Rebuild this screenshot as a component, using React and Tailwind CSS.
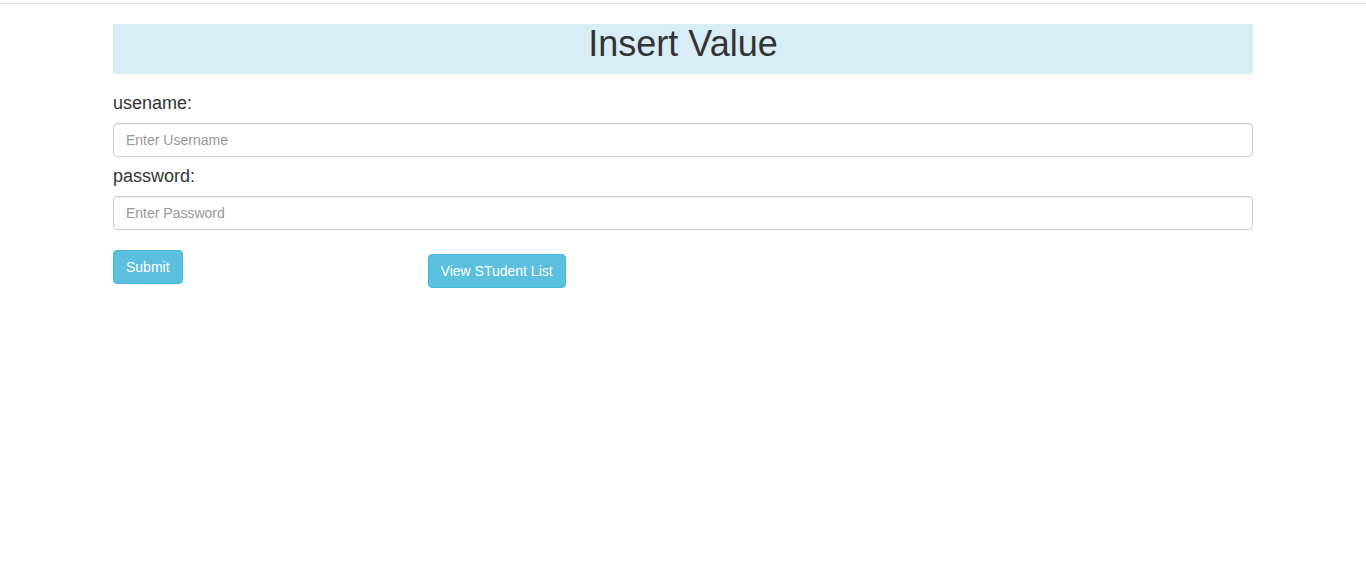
export default function App() {
  return (
    <div className="min-h-[585px] bg-white text-[#333]" style={{ fontFamily: '"Liberation Sans", Arial, sans-serif' }}>
      <div className="mt-[3px] border-t border-[#dddddd]" />
      <div className="mx-auto w-[1140px] pt-[20px]">
        <div className="h-[50px] bg-[#d9edf7] text-center">
          <h1 className="text-[36px] leading-[40px] font-normal text-[#333]">Insert Value</h1>
        </div>
        <div className="mt-[18px]">
          <label className="block text-[18px] leading-[22px] mb-[9px]">usename:</label>
          <input
            type="text"
            placeholder="Enter Username"
            className="block w-full h-[34px] px-[12px] py-[6px] text-[14px] border border-[#ccc] rounded-[4px] shadow-[inset_0_1px_1px_rgba(0,0,0,0.075)] placeholder:text-[#999] outline-none"
          />
          <label className="block text-[18px] leading-[22px] mt-[8px] mb-[9px]">password:</label>
          <input
            type="password"
            placeholder="Enter Password"
            className="block w-full h-[34px] px-[12px] py-[6px] text-[14px] border border-[#ccc] rounded-[4px] shadow-[inset_0_1px_1px_rgba(0,0,0,0.075)] placeholder:text-[#999] outline-none"
          />
        </div>
        <div className="flex items-start mt-[20px]">
          <button className="h-[34px] px-[12px] text-[14px] leading-[20px] text-white bg-[#5bc0de] border border-[#46b8da] rounded-[4px]">
            Submit
          </button>
          <button className="ml-[245px] mt-[4px] h-[34px] px-[12px] text-[14px] leading-[20px] text-white bg-[#5bc0de] border border-[#46b8da] rounded-[4px]">
            View STudent List
          </button>
        </div>
      </div>
    </div>
  );
}
